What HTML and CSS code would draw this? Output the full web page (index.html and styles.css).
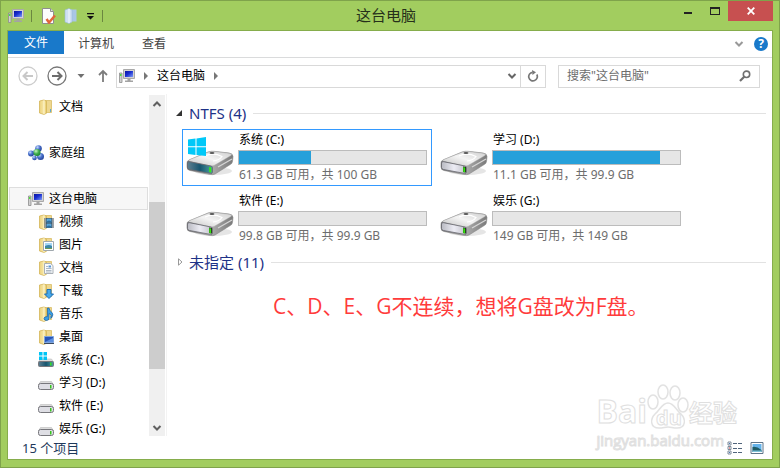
FILE: index.html
```html
<!DOCTYPE html>
<html lang="zh-CN">
<head>
  <meta charset="UTF-8" />
  <meta name="viewport" content="width=device-width, initial-scale=1.0"/>
  <title>这台电脑</title>
  <link rel="stylesheet" href="styles.css">
</head>
<body>

<svg class="sprite" aria-hidden="true">
  <defs>
    <linearGradient id="gold" x1="0" x2="1">
      <stop offset="0" stop-color="#ecd27c"/><stop offset=".6" stop-color="#f7e6a6"/><stop offset="1" stop-color="#e6c968"/>
    </linearGradient>
    <linearGradient id="screen" x1="0" y1="0" x2="1" y2="1">
      <stop offset="0" stop-color="#0a14a0"/><stop offset=".45" stop-color="#1a2fd0"/><stop offset="1" stop-color="#7f9cf5"/>
    </linearGradient>
    <linearGradient id="driveTop" x1="0" y1="1" x2="1" y2="0">
      <stop offset="0" stop-color="#c4c4c4"/><stop offset=".5" stop-color="#f4f4f4"/><stop offset="1" stop-color="#cfcfcf"/>
    </linearGradient>
    <linearGradient id="driveFront" x1="0" x2="1">
      <stop offset="0" stop-color="#b9bac2"/><stop offset=".5" stop-color="#ececf4"/><stop offset="1" stop-color="#c0c0c8"/>
    </linearGradient>
    <linearGradient id="driveSide" x1="0" x2="1">
      <stop offset="0" stop-color="#6c6c6c"/><stop offset=".5" stop-color="#b0b0b0"/><stop offset="1" stop-color="#7a7a7a"/>
    </linearGradient>
    <linearGradient id="teal" x1="0" x2="1">
      <stop offset="0" stop-color="#5f7f90"/><stop offset=".5" stop-color="#17556f"/><stop offset="1" stop-color="#4f9f9f"/>
    </linearGradient>
    <radialGradient id="ballBlue" cx=".35" cy=".3" r=".8">
      <stop offset="0" stop-color="#c6dcff"/><stop offset=".45" stop-color="#4a72cc"/><stop offset="1" stop-color="#1c3a90"/>
    </radialGradient>
    <radialGradient id="ballGreen" cx=".35" cy=".3" r=".8">
      <stop offset="0" stop-color="#c8f5c0"/><stop offset=".5" stop-color="#3fae4c"/><stop offset="1" stop-color="#167a2a"/>
    </radialGradient>
  </defs>

  <symbol id="pc" viewBox="0 0 16 16">
    <path d="M4.500 1.500h11v9h-11z" fill="#d4d4d4" stroke="#a9a9a9"/>
    <path d="M6 3h8v6H6z" fill="url(#screen)"/>
    <path d="M8.500 11h3v1.500h2.500v1.500H6v-1.500h2.500z" fill="#a3a3a3"/>
    <path d="M.5 5h2.500v9.500H.5z" fill="#d0d0d0" stroke="#8d8d8d" stroke-width=".8"/>
    <path d="M1 6h1.500v2H1z" fill="#4fe03c"/>
  </symbol>

  <symbol id="folder" viewBox="0 0 16 16">
    <path d="M7 1.500h6.500v12H7z" fill="#eed78f" stroke="#d8bc66" stroke-width=".8"/>
    <path d="M1.500 2 6 1l2.500 1.200v12L6 15.500l-4.500-1.500z" fill="url(#gold)" stroke="#d4b558" stroke-width=".8"/>
    <path d="M6 1.200v14" stroke="#fdf5cf"/>
    <path d="M12 10h1v3h-1z" fill="#5fa9cf"/>
  </symbol>

  <symbol id="video" viewBox="0 0 16 16">
    <use href="#folder"/>
    <path d="M6.500 4h9v10h-9z" fill="#3c4852"/>
    <path d="M8.500 4.500h5v4h-5zM8.500 9.500h5v4h-5z" fill="#56a6dc"/>
    <path d="M8.500 7.500l2.500-1 2.500 1v1h-5zM8.500 12.500l2.500-1 2.500 1v1h-5z" fill="#2b6e9e"/>
    <path d="M7.500 4.500v9M14.500 4.500v9" stroke="#e8edf0" stroke-dasharray="1 1"/>
  </symbol>

  <symbol id="picture" viewBox="0 0 16 16">
    <use href="#folder"/>
    <path d="M5.500 4.500h10v9h-10z" fill="#fff" stroke="#a0a8ae"/>
    <path d="M7 6h7v6H7z" fill="#a6d6f5"/>
    <path d="M7 9q4-2 7 0v3H7z" fill="#3d87a8"/>
    <path d="M7 11h7v1H7z" fill="#6d9b57"/>
  </symbol>

  <symbol id="document" viewBox="0 0 16 16">
    <use href="#folder"/>
    <path d="M6.500 3.500h6l2.500 2v8H6.500z" fill="#f8fafc" stroke="#aab0b6"/>
    <path d="M8 6.500h2M8 8.500h5.500M8 10.500h5.500M8 12h5.500" stroke="#99a7b5" stroke-width=".8"/>
    <path d="M10.500 5.500h2.500v2h-2.500z" fill="#5a97d6"/>
  </symbol>

  <symbol id="download" viewBox="0 0 16 16">
    <use href="#folder"/>
    <path d="M9 6.500h4V11h2.500L11 15.500 6.500 11H9z" fill="#46a9ea" stroke="#1d6fb6"/>
  </symbol>

  <symbol id="music" viewBox="0 0 16 16">
    <use href="#folder"/>
    <path d="M9.500 2h1.500q.5 3 3 4.500Q16 8.500 13.500 12q.5-3.500-2.500-4.500v4.500q0 2.500-2.500 2.500T6 12.500q0-2 3.500-2z" fill="#39a0e8" stroke="#1b5f9e" stroke-width=".7"/>
  </symbol>

  <symbol id="desktop" viewBox="0 0 16 16">
    <use href="#folder"/>
    <path d="M6.500 7.500h9v6h-9z" fill="#2754b8" stroke="#7fa4dc"/>
    <path d="M7 13l8-4v4z" fill="#5d8fe0"/>
    <path d="M6 14h10v1H6z" fill="#3b4b60"/>
  </symbol>

  <symbol id="homegroup" viewBox="0 0 16 16">
    <path d="M3 8l7-5 3 9z" fill="none" stroke="#8fb6e8" stroke-width="1.500"/>
    <circle cx="10.500" cy="3.500" r="3.300" fill="url(#ballBlue)"/>
    <circle cx="3" cy="8.500" r="3" fill="url(#ballBlue)"/>
    <circle cx="12.500" cy="11.500" r="3.500" fill="url(#ballBlue)"/>
    <circle cx="9" cy="7.500" r="3.500" fill="url(#ballGreen)"/>
    <circle cx="6.500" cy="13" r="2.300" fill="url(#ballBlue)"/>
  </symbol>

  <symbol id="drive" viewBox="0 0 16 16">
    <path d="M2.500 6.500h11l2 3.500H.5z" fill="#dcdcdc" stroke="#bcbcbc" stroke-width=".6"/>
    <rect x=".5" y="8.500" width="15" height="6" rx="2" fill="#dedee4" stroke="#77777c"/>
    <path d="M12 10h1.500v3.500H12z" fill="#37c61e"/>
  </symbol>

  <symbol id="drive-system" viewBox="0 0 16 16">
    <path d="M2.500 7h11l2 3H.5z" fill="#dcdcdc" stroke="#bcbcbc" stroke-width=".6"/>
    <rect x=".5" y="9.500" width="15" height="5" rx="1" fill="url(#teal)" stroke="#77777c"/>
    <path d="M12 10.500h1.500v3H12z" fill="#37e01e"/>
    <path d="M1 0h3.500v3.500H1zM5.500 0H9v3.500H5.500zM1 4.500h3.500V8H1zM5.500 4.500H9V8H5.500z" fill="#00c4f5"/>
  </symbol>

  <symbol id="disk" viewBox="0 0 48 48">
    <ellipse cx="27" cy="39" rx="19" ry="4" fill="#000" opacity=".1"/>
    <path d="M1 32q-.5-3 2-4l19-8q3-1 6-.700l15 1.700q4 .5 4 3.500l-.5 5q0 2-3 3.500L29 42q-2 1-5 .5L4 38.500Q1 38 1 35z" fill="url(#driveSide)" stroke="#888" stroke-width=".6"/>
    <path d="M2.500 29q0-1 2-1.800L23 20q2-.8 5-.5l15 1.700q4 .8 2 2.300L28 33.500q-2 .8-4 .3z" fill="url(#driveTop)" stroke="#aaa" stroke-width=".4"/>
    <path d="M19 24q8-4 17 .5-3 4-9 4.500" fill="none" stroke="#fff" stroke-width="1.200"/>
    <ellipse cx="26" cy="21" rx="2.500" ry=".9" fill="#555"/>
    <path d="M32 35l14-8" stroke="#d6d6d6" stroke-width="1.200"/>
  </symbol>

  <symbol id="disk-data" viewBox="0 0 48 48">
    <use href="#disk"/>
    <path d="M1.500 31q0-1.700 2-1.300L25 34q1.500.4 1.500 1.700v4.500q0 1.600-2 1.200L3.500 37.500q-2-.4-2-2z" fill="url(#driveFront)" stroke="#686870" stroke-width=".8"/>
    <path d="M23 34.500l3 .6v5.500l-3-.6z" fill="#222"/>
    <path d="M23.200 35l2 .4v5l-2-.4z" fill="#35e010"/>
  </symbol>

  <symbol id="disk-windows" viewBox="0 0 48 48">
    <use href="#disk"/>
    <path d="M1.500 31q0-1.700 2-1.300L25 34q1.500.4 1.500 1.700v4.500q0 1.600-2 1.200L3.500 37.500q-2-.4-2-2z" fill="url(#teal)" stroke="#686870" stroke-width=".8"/>
    <path d="M23.200 35l2 .4v5l-2-.4z" fill="#35f010"/>
    <path d="M2 7.500l7.500-1v7.700H2zM10.500 6.400L20 5v9.200h-9.500zM2 15.200h7.500V23L2 22zM10.500 15.200H20V24l-9.500-1z" fill="#00c8f8"/>
  </symbol>

  <symbol id="chevron" viewBox="0 0 10 10">
    <path d="M1.500 3l3.500 3.500L8.500 3" fill="none" stroke="currentColor" stroke-width="2"/>
  </symbol>

  <symbol id="arrow-right" viewBox="0 0 6 8">
    <path d="M1 0l4 4-4 4z" fill="currentColor"/>
  </symbol>
</svg>

<div class="window">
  <header class="titlebar">
    <div class="quick">
      <svg class="icon"><use href="#pc"/></svg>
      <span class="sep"></span>
      <button class="plain" aria-label="属性">
        <svg class="icon" viewBox="0 0 16 16">
          <path d="M1.500 .5h8l3 3v12h-11z" fill="#fdfdfd" stroke="#8f8f8f"/>
          <path d="M9.500 .5v3h3" fill="#ddd" stroke="#8f8f8f"/>
          <path d="M5.500 11l2.500 3.500 6-7" fill="none" stroke="#e0663a" stroke-width="2.500"/>
        </svg>
      </button>
      <button class="plain" aria-label="新建文件夹">
        <svg class="icon" viewBox="0 0 16 16">
          <path d="M6 1.500h6.500v12H6z" fill="#a9c6e6"/>
          <path d="M1 2l4-1.500 3 1.500v12l-3 1.500L1 14z" fill="#cfe0f3" stroke="#9bbbdc" stroke-width=".6"/>
          <path d="M5 1v14" stroke="#f3f8fd"/>
        </svg>
      </button>
      <button class="plain" aria-label="自定义快速访问工具栏">
        <svg class="icon-small" viewBox="0 0 8 8"><path d="M0 1h7v1.200H0zM0 4h7L3.500 7.500z" fill="#111"/></svg>
      </button>
      <span class="sep"></span>
    </div>
    <h1 class="title">这台电脑</h1>
    <div class="controls">
      <button class="control" aria-label="最小化">
        <svg class="icon-small" viewBox="0 0 8 8"><path d="M0 5h8v2H0z" fill="#222"/></svg>
      </button>
      <button class="control" aria-label="最大化">
        <svg class="icon-max" viewBox="0 0 10 8"><path d="M0 0h10v8H0zM1 2v5h8V2z" fill="#222" fill-rule="evenodd"/></svg>
      </button>
      <button class="control close" aria-label="关闭">
        <svg class="icon-small" viewBox="0 0 8 8"><path d="M.7 .7l6.600 6.600M7.300 .7L.7 7.300" stroke="#fff" stroke-width="1.800"/></svg>
      </button>
    </div>
  </header>

  <div class="frame">
    <nav class="ribbon">
      <button class="tab file">文件</button>
      <button class="tab">计算机</button>
      <button class="tab">查看</button>
      <div class="ribbon-end">
        <button class="plain expand" aria-label="展开功能区"><svg class="icon-chevron"><use href="#chevron"/></svg></button>
        <button class="help" aria-label="帮助">?</button>
      </div>
    </nav>

    <div class="toolbar">
      <button class="plain back" aria-label="后退">
        <svg class="icon-nav" viewBox="0 0 20 20">
          <circle cx="10" cy="10" r="9" fill="none" stroke="#cdcdcd" stroke-width="1.300"/>
          <path d="M15 10H6M9.500 6l-4 4 4 4" fill="none" stroke="#c8c8c8" stroke-width="2"/>
        </svg>
      </button>
      <button class="plain forward" aria-label="前进">
        <svg class="icon-nav" viewBox="0 0 20 20">
          <circle cx="10" cy="10" r="9" fill="none" stroke="#777" stroke-width="1.300"/>
          <path d="M5 10h9M10.500 6l4 4-4 4" fill="none" stroke="#6d6d6d" stroke-width="2"/>
        </svg>
      </button>
      <button class="plain recent" aria-label="最近浏览的位置">
        <svg class="icon-small" viewBox="0 0 8 8"><path d="M.5 2h7L4 6z" fill="#707070"/></svg>
      </button>
      <button class="plain up" aria-label="上移">
        <svg class="icon-up" viewBox="0 0 10 14"><path d="M5 13V2M1 6l4-4 4 4" fill="none" stroke="#7c7c7c" stroke-width="1.800"/></svg>
      </button>

      <div class="address">
        <svg class="icon"><use href="#pc"/></svg>
        <svg class="icon-arrow"><use href="#arrow-right"/></svg>
        <a class="crumb" href="#">这台电脑</a>
        <svg class="icon-arrow"><use href="#arrow-right"/></svg>
        <button class="plain history" aria-label="以前的位置"><svg class="icon-chevron"><use href="#chevron"/></svg></button>
        <button class="plain refresh" aria-label="刷新">
          <svg class="icon-refresh" viewBox="0 0 12 12">
            <path d="M9.800 4.500A4.300 4.300 0 1 1 5.500 2.300" fill="none" stroke="#777" stroke-width="1.700"/>
            <path d="M5 0l4 2.300L5.500 5z" fill="#777"/>
          </svg>
        </button>
      </div>

      <form class="search">
        <input type="text" placeholder="搜索&quot;这台电脑&quot;" aria-label="搜索">
        <button type="button" class="plain" aria-label="开始搜索">
          <svg class="icon-refresh" viewBox="0 0 12 12">
            <circle cx="7.500" cy="4.300" r="3.200" fill="none" stroke="#6f6f6f" stroke-width="1.600"/>
            <path d="M5.200 6.800L1 11" stroke="#6f6f6f" stroke-width="2.200"/>
          </svg>
        </button>
      </form>
    </div>

    <div class="body">
      <aside class="sidebar">
        <ul class="tree">
          <li><a class="node child" href="#"><svg class="icon"><use href="#folder"/></svg>文档</a></li>
          <li class="root"><a class="node" href="#"><svg class="icon"><use href="#homegroup"/></svg>家庭组</a></li>
          <li class="root"><a class="node selected" href="#"><svg class="icon"><use href="#pc"/></svg>这台电脑</a></li>
          <li><a class="node child" href="#"><svg class="icon"><use href="#video"/></svg>视频</a></li>
          <li><a class="node child" href="#"><svg class="icon"><use href="#picture"/></svg>图片</a></li>
          <li><a class="node child" href="#"><svg class="icon"><use href="#document"/></svg>文档</a></li>
          <li><a class="node child" href="#"><svg class="icon"><use href="#download"/></svg>下载</a></li>
          <li><a class="node child" href="#"><svg class="icon"><use href="#music"/></svg>音乐</a></li>
          <li><a class="node child" href="#"><svg class="icon"><use href="#desktop"/></svg>桌面</a></li>
          <li><a class="node child" href="#"><svg class="icon"><use href="#drive-system"/></svg>系统 (C:)</a></li>
          <li><a class="node child" href="#"><svg class="icon"><use href="#drive"/></svg>学习 (D:)</a></li>
          <li><a class="node child" href="#"><svg class="icon"><use href="#drive"/></svg>软件 (E:)</a></li>
          <li><a class="node child" href="#"><svg class="icon"><use href="#drive"/></svg>娱乐 (G:)</a></li>
        </ul>
        <div class="scrollbar">
          <button class="plain scroll-up" aria-label="向上滚动"><svg class="icon-chevron"><use href="#chevron"/></svg></button>
          <div class="track"><div class="thumb"></div></div>
          <button class="plain" aria-label="向下滚动"><svg class="icon-chevron"><use href="#chevron"/></svg></button>
        </div>
      </aside>

      <main class="content">
        <h2 class="group">
          <svg class="icon-small" viewBox="0 0 8 8"><path d="M6 1v6H0z" fill="#333"/></svg>
          NTFS (4)
        </h2>
        <div class="drives">
          <div class="drive selected">
            <svg class="icon-disk"><use href="#disk-windows"/></svg>
            <div class="info">
              <div class="name">系统 (C:)</div>
              <div class="bar"><div class="used" style="width: 38.700%"></div></div>
              <div class="size">61.3 GB 可用，共 100 GB</div>
            </div>
          </div>
          <div class="drive">
            <svg class="icon-disk"><use href="#disk-data"/></svg>
            <div class="info">
              <div class="name">学习 (D:)</div>
              <div class="bar"><div class="used" style="width: 89.300%"></div></div>
              <div class="size">11.1 GB 可用，共 99.9 GB</div>
            </div>
          </div>
          <div class="drive">
            <svg class="icon-disk"><use href="#disk-data"/></svg>
            <div class="info">
              <div class="name">软件 (E:)</div>
              <div class="bar"><div class="used" style="width: 0%"></div></div>
              <div class="size">99.8 GB 可用，共 99.9 GB</div>
            </div>
          </div>
          <div class="drive">
            <svg class="icon-disk"><use href="#disk-data"/></svg>
            <div class="info">
              <div class="name">娱乐 (G:)</div>
              <div class="bar"><div class="used" style="width: 0%"></div></div>
              <div class="size">149 GB 可用，共 149 GB</div>
            </div>
          </div>
        </div>
        <h2 class="group">
          <svg class="icon-small" viewBox="0 0 8 8"><path d="M2.500 .8L6 4 2.500 7.200z" fill="#fff" stroke="#999"/></svg>
          未指定 (11)
        </h2>
        <p class="note">C、D、E、G不连续，想将G盘改为F盘。</p>
      </main>
    </div>

    <footer class="status">
      <span class="count">15 个项目</span>
      <div class="views">
        <button class="plain" aria-label="详细信息">
          <svg class="icon-view" viewBox="0 0 16 14">
            <path d="M1 1h3v3H1zM1 5.500h3v3H1zM1 10h3v3H1z" fill="#fff" stroke="#7d8a99"/>
            <path d="M2 2h1v1H2zM2 11h1v1H2z" fill="#4b78b8"/><path d="M2 6.500h1v1H2z" fill="#c33"/>
            <path d="M6 2.500h4M11 2.500h4M6 7.500h4M11 7.500h4M6 11.500h4M11 11.500h4" stroke="#51657c"/>
          </svg>
        </button>
        <button class="plain" aria-label="大图标">
          <svg class="icon-view" viewBox="0 0 16 14">
            <path d="M2 1.500h12v11H2z" fill="#fff" stroke="#5f7488"/>
            <path d="M3.500 3h9v8h-9z" fill="#65b3ea"/>
            <path d="M3.500 6q4-1 9 3v2h-9z" fill="#1f5c66"/>
            <path d="M3.500 9.500h9V11h-9z" fill="#7fc4d9"/>
          </svg>
        </button>
      </div>
    </footer>
  </div>

  <div class="watermark">
    <div class="brand">
      <span class="brand-text">Bai</span>
      <div class="paw">
        <svg viewBox="0 0 42 46">
          <g fill="#fff" stroke="#dcdcdc" stroke-width="1.500">
            <ellipse cx="6" cy="18" rx="5" ry="7"/>
            <ellipse cx="16" cy="8" rx="5" ry="7"/>
            <ellipse cx="28" cy="9" rx="5" ry="7"/>
            <ellipse cx="36" cy="21" rx="5" ry="7"/>
            <path d="M21 19c-6 0-8 7-13 11-5 5-5 14 4 14 4 0 6-1 9-1s5 1 9 1c9 0 9-9 4-14-5-4-7-11-13-11z"/>
          </g>
        </svg>
        <span class="paw-text">du</span>
      </div>
      <span class="brand-text cn">经验</span>
    </div>
    <div class="site">jingyan.baidu.com</div>
  </div>
</div>

</body>
</html>
```
FILE: styles.css
```css
* { box-sizing: border-box; }

body {
  margin: 0; color: #000;
  font: 12px/16px 'Noto Sans', 'Noto Sans CJK SC', sans-serif;
}

h1, h2, p, ul { margin: 0; padding: 0; font-weight: normal; }
ul { list-style: none; }
a { color: inherit; text-decoration: none; }
svg { display: block; flex: none; }
button, input { font: inherit; color: inherit; }
button { border: none; padding: 0; background: none; cursor: pointer; }

.sprite { position: absolute; width: 0; height: 0; }

.icon { width: 16px; height: 16px; }
.icon-small { width: 8px; height: 8px; }
.icon-max { width: 10px; height: 8px; }
.icon-chevron { width: 10px; height: 10px; }
.icon-arrow { width: 6px; height: 8px; color: #777; }
.icon-nav { width: 20px; height: 20px; }
.icon-up { width: 10px; height: 14px; }
.icon-refresh { width: 12px; height: 12px; }
.icon-view { width: 16px; height: 14px; }
.icon-disk { width: 48px; height: 48px; }

.plain { display: flex; align-items: center; justify-content: center; }

.window {
  position: relative; height: 100vh;
  display: flex; flex-direction: column;
  background: #a2cd5f; border: 1px solid #7fa34b;
  padding: 0 6px 7px;
}

/* title bar */
.titlebar { display: flex; height: 29px; flex: none; }
.quick { display: flex; align-items: center; gap: 7px; padding-left: 1px; }
.sep { width: 1px; height: 12px; background: #6b8740; }
.quick .icon + .sep { margin-right: 2px; }
.title {
  flex: 1; text-align: center; padding-right: 5px;
  font-size: 15px; line-height: 28px; color: #26301a;
}
.controls { display: flex; }
.control {
  width: 27px; height: 20px;
  display: flex; align-items: center; justify-content: center;
}
.close { width: 45px; background: #c75050; }

.frame {
  flex: 1; min-height: 0;
  display: flex; flex-direction: column;
  background: #fff; border: 1px solid #86ad4c;
}

/* ribbon tabs */
.ribbon { display: flex; height: 27px; flex: none; border-bottom: 1px solid #dadbdc; }
.tab { height: 26px; padding: 0 14px; color: #444; }
.file { height: 23px; padding: 0 16px; background: #1979ca; color: #fff; }
.ribbon-end { margin-left: auto; display: flex; align-items: center; gap: 10px; padding-right: 4px; }
.expand { color: #999; }
.help {
  width: 14px; height: 14px; border-radius: 50%;
  background: #1979ca; color: #fff; font-weight: bold; line-height: 14px;
}

/* address and search */
.toolbar { display: flex; align-items: center; height: 36px; flex: none; padding: 0 12px 0 10px; }
.forward { margin-left: 9px; }
.recent { margin-left: 10px; }
.up { margin-left: 13px; }
.address {
  flex: 1; height: 23px; margin-left: 8px;
  display: flex; align-items: center;
  border: 1px solid #d9d9d9; padding-left: 2px;
}
.address .icon-arrow { margin: 0 8px; }
.history { margin-left: auto; margin-right: 3px; color: #666; }
.refresh { width: 25px; height: 21px; border-left: 1px solid #d9d9d9; }
.search {
  width: 202px; height: 23px; margin-left: 12px;
  display: flex; align-items: center;
  border: 1px solid #d9d9d9; padding: 0 8px;
}
.search input { flex: 1; min-width: 0; border: none; outline: none; padding: 0; background: none; }
.search input::placeholder { color: #6d6d6d; opacity: 1; }

.body { flex: 1; min-height: 0; display: flex; }

/* navigation tree */
.sidebar { width: 159px; flex: none; display: flex; border-right: 1px solid #f3f3f3; }
.tree { flex: 1; overflow: hidden; padding: 1px 1px 0; }
.root { margin-top: 23px; }
.node {
  display: flex; align-items: center; gap: 5px;
  height: 23px; padding-left: 18px; border: 1px solid transparent;
}
.node.child { padding-left: 28px; }
.node.selected { background: #f7f7f7; border-color: #dedede; }

.scrollbar {
  width: 16px; margin: 1px 1px 0 0;
  display: flex; flex-direction: column;
  background: #f0f0f0; color: #606060;
}
.scrollbar .plain { height: 17px; flex: none; }
.scroll-up svg { transform: rotate(180deg); }
.track { flex: 1; padding-top: 90px; }
.thumb { height: 77%; background: #cdcdcd; }

/* drives */
.content { flex: 1; min-width: 0; padding: 8px 6px 0 9px; }
.group {
  display: flex; align-items: center; gap: 5px;
  font-size: 15px; line-height: 22px; color: #1e3287;
}
.group::after { content: ''; flex: 1; height: 1px; margin-left: 2px; background: #e2e2e2; }
.drives {
  display: grid; grid-template-columns: repeat(auto-fill, 250px); gap: 4px;
  padding: 5px 0 4px 6px;
}
.drive {
  display: flex; gap: 4px; height: 57px;
  border: 1px solid transparent; padding: 2px 4px 0 3px;
}
.drive.selected { border-color: #3399ff; }
.info { flex: 1; min-width: 0; }
.name, .size { padding-left: 1px; white-space: nowrap; }
.bar { height: 15px; margin: 2px 0; background: #e6e6e6; border: 1px solid #bcbcbc; }
.used { height: 100%; background: #26a0da; }
.size { color: #6d6d6d; }

.note {
  padding: 18px 0 0 97px;
  font-family: 'Open Sans', 'Noto Sans CJK SC', sans-serif;
  font-size: 21px; line-height: 30px; color: #ff3b3b;
}

/* status bar */
.status {
  display: flex; align-items: center; justify-content: space-between;
  height: 23px; flex: none; padding: 0 7px 0 14px;
}
.count { font-size: 13px; color: #1e395b; }
.views { display: flex; gap: 6px; }

.watermark {
  position: absolute; right: 42px; bottom: 17px;
  font-family: 'Open Sans', 'Noto Sans CJK SC', sans-serif;
  pointer-events: none; opacity: .8;
}
.brand { display: flex; align-items: flex-end; }
.brand-text, .paw-text, .site {
  color: #fff; font-weight: bold;
  -webkit-text-stroke: 1px #d8d8d8;
}
.brand-text { font-size: 32px; line-height: 38px; }
.brand-text.cn { font-size: 24px; line-height: 34px; }
.paw { position: relative; width: 42px; height: 46px; }
.paw-text { position: absolute; left: 9px; bottom: 0; font-size: 20px; line-height: 24px; }
.site { font-size: 15px; line-height: 20px; font-weight: normal; }
```
